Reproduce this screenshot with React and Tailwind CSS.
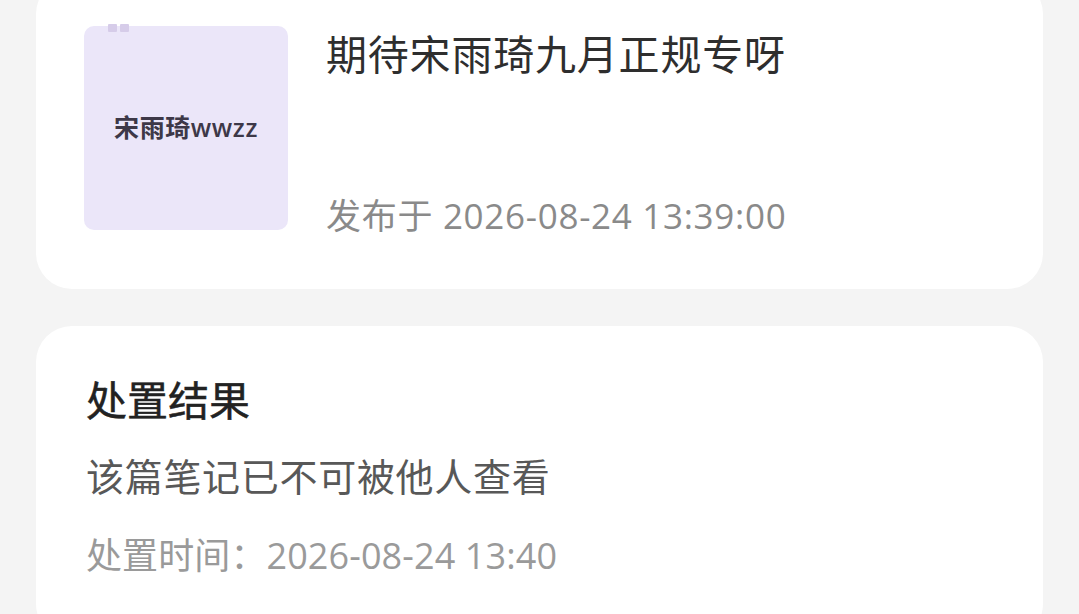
export default function App() {
  const font = { fontFamily: '"Open Sans", "Noto Sans CJK SC", "Noto Sans", sans-serif' };
  return (
    <div className="w-[1079px] h-[614px] overflow-hidden bg-[#f4f4f4]" style={font}>
      <div className="mx-[36px] -mt-[22px] bg-white rounded-[36px] pl-[48px] pr-[48px] pt-[48px] pb-[59px] flex gap-[38px]">
        <div className="relative w-[204px] h-[204px] rounded-[10px] bg-[#ebe6f9] flex items-center justify-center shrink-0">
          <div className="absolute left-[24px] -top-[2px] flex gap-[3px]">
            <div className="w-[9px] h-[8px] bg-[#d6cce9] rounded-[1px]"></div>
            <div className="w-[9px] h-[8px] bg-[#d6cce9] rounded-[1px]"></div>
          </div>
          <span className="text-[25px] font-semibold text-[#3d3848] leading-none tracking-[0.6px] -mt-[2px]">宋雨琦wwzz</span>
        </div>
        <div className="h-[204px] flex flex-col justify-between">
          <div className="mt-[2px] text-[41px] leading-[52px] text-[#2e2e2e] tracking-[0.8px]">期待宋雨琦九月正规专呀</div>
          <div className="-mb-[8px] text-[35px] leading-[44px] text-[#8a8a8a] tracking-[0.7px]">发布于 2026-08-24 13:39:00</div>
        </div>
      </div>
      <div className="mx-[36px] mt-[37px] bg-white rounded-[36px] pl-[50px] pr-[50px] pt-[48px] pb-[60px]">
        <div className="text-[41px] leading-[52px] text-[#222222] [-webkit-text-stroke:0.5px_#222222]">处置结果</div>
        <div className="mt-[24px] text-[38px] leading-[52px] text-[#585858] tracking-[0.7px]">该篇笔记已不可被他人查看</div>
        <div className="mt-[30px] text-[36px] leading-[48px] text-[#9a9a9a] tracking-[0.1px]">处置时间：2026-08-24 13:40</div>
      </div>
    </div>
  );
}
